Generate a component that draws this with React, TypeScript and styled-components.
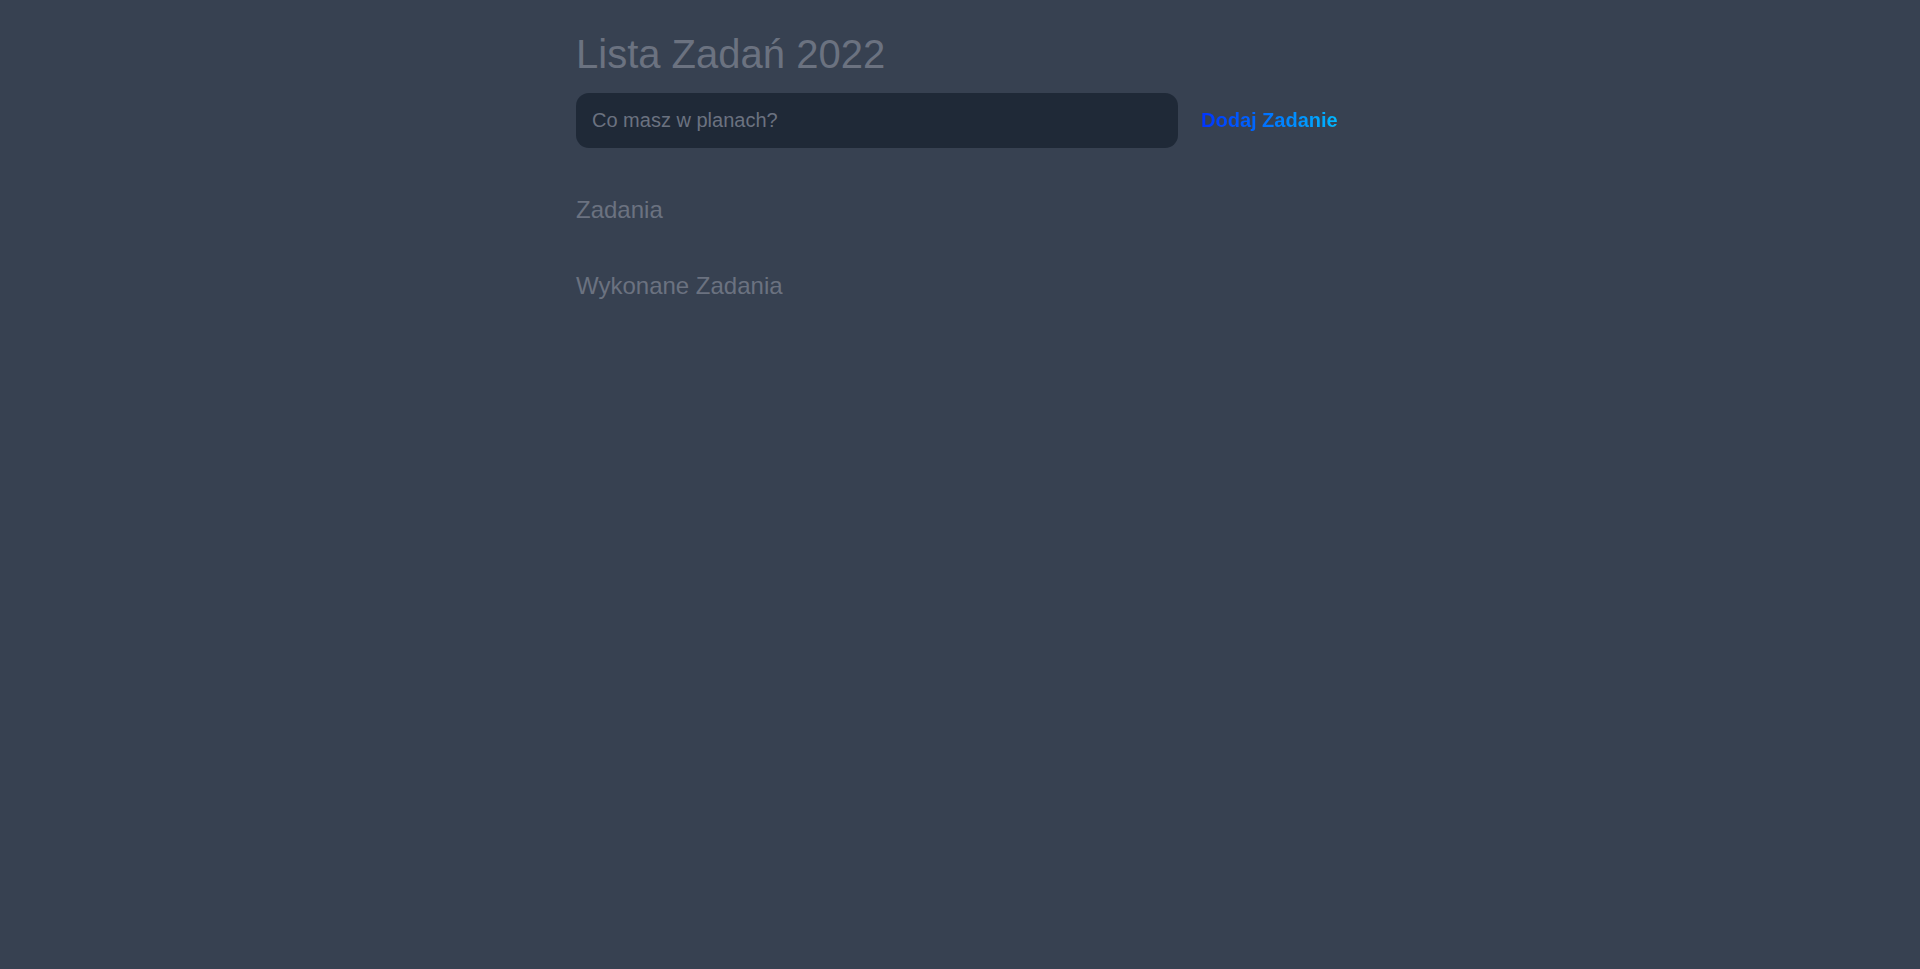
import React, { useState } from "react";
import styled, { createGlobalStyle } from "styled-components";

const GlobalStyle = createGlobalStyle`
  html, body {
    margin: 0;
    padding: 0;
    background: #374151;
    min-height: 100%;
  }
  body {
    font-family: "Liberation Sans", Arial, sans-serif;
    color: #6b7280;
  }
`;

const Page = styled.main`
  min-height: 100vh;
  background: #374151;
`;

const Container = styled.div`
  max-width: 768px;
  margin: 0 auto;
  padding-top: 30px;
  display: flex;
  flex-direction: column;
`;

const Title = styled.h1`
  margin: 0;
  font-size: 40px;
  line-height: 48px;
  font-weight: 400;
  color: #6b7280;
`;

const Form = styled.form`
  display: flex;
  align-items: center;
  gap: 23px;
  margin-top: 15px;
`;

const Input = styled.input`
  width: 602px;
  box-sizing: border-box;
  height: 55px;
  padding: 0 16px;
  border: none;
  outline: none;
  border-radius: 13px;
  background: #1f2937;
  color: #9ca3af;
  font-family: "Liberation Sans", Arial, sans-serif;
  font-size: 20px;
  &::placeholder {
    color: #6b7280;
  }
`;

const AddButton = styled.button`
  border: none;
  background: none;
  padding: 0;
  cursor: pointer;
  font-family: "Liberation Sans", Arial, sans-serif;
  font-size: 20px;
  font-weight: 700;
  line-height: 23px;
  background-image: linear-gradient(to right, #0033ff, #00b8ff);
  -webkit-background-clip: text;
  background-clip: text;
  color: transparent;
`;

const Section = styled.section`
  margin-top: 46px;
  & + & {
    margin-top: 44px;
  }
`;

const SectionTitle = styled.h2`
  margin: 0;
  font-size: 24px;
  line-height: 32px;
  font-weight: 400;
  color: #6b7280;
`;

const List = styled.ul`
  list-style: none;
  margin: 0;
  padding: 0;
`;

export default function App() {
  const [value, setValue] = useState("");
  return (
    <Page>
      <GlobalStyle />
      <Container>
        <Title>Lista Zadań 2022</Title>
        <Form onSubmit={(e) => e.preventDefault()}>
          <Input
            placeholder="Co masz w planach?"
            value={value}
            onChange={(e) => setValue(e.target.value)}
          />
          <AddButton type="submit">Dodaj Zadanie</AddButton>
        </Form>
        <Section>
          <SectionTitle>Zadania</SectionTitle>
          <List />
        </Section>
        <Section>
          <SectionTitle>Wykonane Zadania</SectionTitle>
          <List />
        </Section>
      </Container>
    </Page>
  );
}
